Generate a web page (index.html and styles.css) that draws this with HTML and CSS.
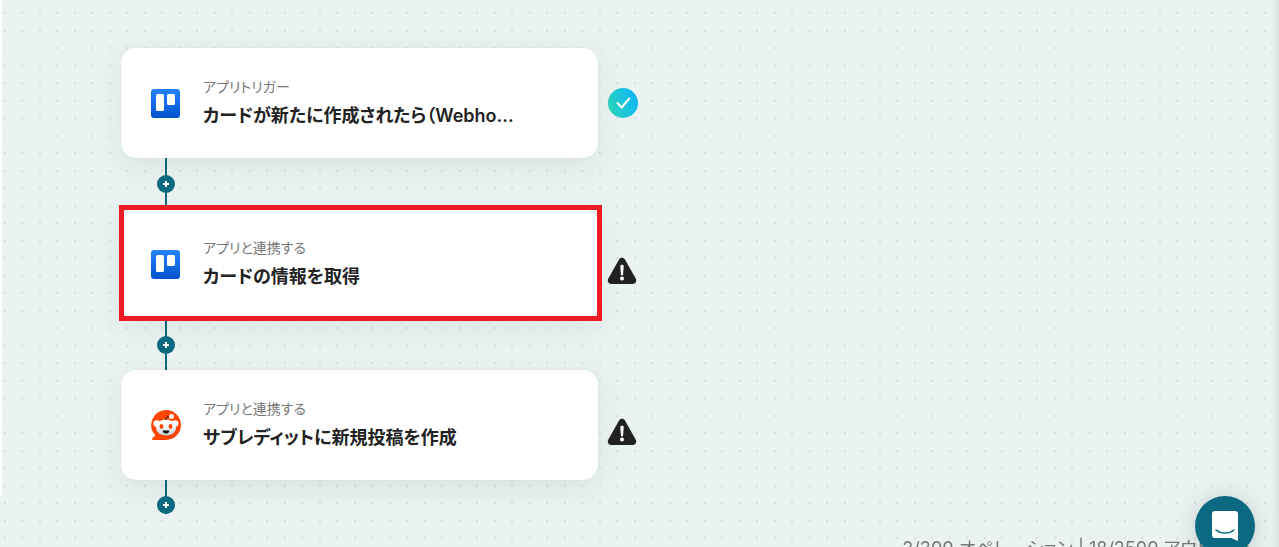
FILE: index.html
```
<!DOCTYPE html>
<html lang="ja">

<head>
    <meta charset="UTF-8">
    <meta name="viewport" content="width=device-width, initial-scale=1.0">
    <title>フロー</title>
    <link rel="stylesheet" href="styles.css">
</head>

<body>
    <svg class="defs" aria-hidden="true">
        <defs>
            <linearGradient id="trello-blue" x1="0" y1="0" x2="0" y2="1">
                <stop offset="0" stop-color="#2684ff" />
                <stop offset="1" stop-color="#0052cc" />
            </linearGradient>
            <linearGradient id="snoo-face" x1="0" y1="0" x2="0" y2="1">
                <stop offset="0.4" stop-color="#ffffff" />
                <stop offset="1" stop-color="#b9cdd4" />
            </linearGradient>
            <symbol id="trello" viewBox="0 0 30 30">
                <rect width="29" height="29" y="1" rx="3" fill="url(#trello-blue)" />
                <rect x="5" y="6" width="8" height="17" rx="1.500" fill="#fff" />
                <rect x="16" y="6" width="8" height="11" rx="1.500" fill="#fff" />
            </symbol>
            <symbol id="reddit" viewBox="0 0 30 30">
                <path d="M15 0a15 15 0 1 1 0 30H2.200c-1.300 0-1.600-1-.8-1.800l3-2.900A15 15 0 0 1 15 0z" fill="#ff4500" />
                <circle cx="5.800" cy="13.500" r="3.300" fill="#fff" />
                <circle cx="24.200" cy="13.500" r="3.300" fill="#fff" />
                <ellipse cx="15" cy="17.500" rx="10" ry="8" fill="url(#snoo-face)" />
                <path d="M14.800 10c.2-2.400 1.400-3.700 4-4" fill="none" stroke="#222" stroke-width="1.200" />
                <circle cx="20.500" cy="6.500" r="2.500" fill="#fff" />
                <ellipse cx="10.500" cy="16.500" rx="1.900" ry="2.400" fill="#ff4500" />
                <ellipse cx="19.500" cy="16.500" rx="1.900" ry="2.400" fill="#ff4500" />
                <path d="M11.500 20.500h7c-.3 2-1.600 3-3.500 3s-3.200-1-3.500-3z" fill="#111" />
            </symbol>
            <symbol id="warning" viewBox="0 0 30 28">
                <path d="M12 2.400c1.300-2.200 4.700-2.200 6 0l10.800 19.400c1.200 2.200-.3 5.200-3 5.200H4.200c-2.700 0-4.200-3-3-5.200z" fill="#222" />
                <path d="M13.300 9c0-1.800 3.400-1.800 3.400 0l-.6 8.500c-.1 1.200-2.100 1.200-2.200 0z" fill="#fff" />
                <circle cx="15" cy="21.500" r="2" fill="#fff" />
            </symbol>
        </defs>
    </svg>

    <main class="canvas">
        <div class="flow">
            <div class="row">
                <section class="card">
                    <svg class="app-icon" role="img" aria-label="Trello"><use href="#trello" /></svg>
                    <div class="card-text">
                        <p class="label">アプリトリガー</p>
                        <h2 class="title">カードが新たに作成されたら（Webho...</h2>
                    </div>
                </section>
                <span class="done" role="img" aria-label="完了">
                    <svg viewBox="0 0 30 30"><path d="M9.500 15l4.200 4.500 7.500-9" /></svg>
                </span>
            </div>
            <div class="connector">
                <button class="add" type="button" aria-label="追加"></button>
            </div>
            <div class="row">
                <section class="card selected">
                    <svg class="app-icon" role="img" aria-label="Trello"><use href="#trello" /></svg>
                    <div class="card-text">
                        <p class="label">アプリと連携する</p>
                        <h2 class="title">カードの情報を取得</h2>
                    </div>
                </section>
                <svg class="warning" role="img" aria-label="未設定"><use href="#warning" /></svg>
            </div>
            <div class="connector">
                <button class="add" type="button" aria-label="追加"></button>
            </div>
            <div class="row">
                <section class="card">
                    <svg class="app-icon" role="img" aria-label="Reddit"><use href="#reddit" /></svg>
                    <div class="card-text">
                        <p class="label">アプリと連携する</p>
                        <h2 class="title">サブレディットに新規投稿を作成</h2>
                    </div>
                </section>
                <svg class="warning" role="img" aria-label="未設定"><use href="#warning" /></svg>
            </div>
            <div class="connector last">
                <button class="add" type="button" aria-label="追加"></button>
            </div>
        </div>
    </main>

    <p class="usage">2/300 オペレーション | 18/2500 アウトプット</p>

    <button class="chat" type="button" aria-label="チャット">
        <svg viewBox="0 0 28 32">
            <path d="M4 1h20a3 3 0 0 1 3 3v27l-7-3H4a3 3 0 0 1-3-3V4a3 3 0 0 1 3-3z" fill="#fff" />
            <path d="M5 20c5 4 13 4 18 0" fill="none" stroke="#0b6a82" stroke-width="1.500" stroke-linecap="round" />
        </svg>
    </button>
</body>

</html>
```

FILE: styles.css
```
* {
    box-sizing: border-box;
}

body {
    margin: 0;
    min-height: 100vh;
    overflow: hidden;
    background-color: #eaf3f2;
    /* two dots per row and column in each 35px tile */
    background-image:
        radial-gradient(circle at 5px 13px, #d8dfde 1px, transparent 1px),
        radial-gradient(circle at 22px 13px, #d8dfde 1px, transparent 1px),
        radial-gradient(circle at 5px 31px, #d8dfde 1px, transparent 1px),
        radial-gradient(circle at 22px 31px, #d8dfde 1px, transparent 1px);
    background-size: 35px 35px;
    font-family: Inter, "Noto Sans CJK JP", sans-serif;
    font-feature-settings: "palt";
    color: #222;
}

/* panel edges on both sides of the canvas */
body::before {
    content: "";
    position: fixed;
    top: 0;
    left: 0;
    bottom: 51px;
    width: 2px;
    background: #fff;
}

body::after {
    content: "";
    position: fixed;
    top: 0;
    right: 0;
    bottom: 0;
    width: 8px;
    background: linear-gradient(to right, transparent, #d9e1e0);
}

.defs {
    position: absolute;
    width: 0;
    height: 0;
}

.canvas {
    padding: 48px 0 0 121px;
}

.row {
    display: flex;
    align-items: center;
    gap: 10px;
}

.card {
    position: relative;
    display: flex;
    align-items: center;
    gap: 22px;
    width: 477px;
    padding: 27px 30px;
    background: #fff;
    border-radius: 15px;
    box-shadow: 0 0 0 1px rgba(0, 0, 0, 0.02), 0 8px 30px rgba(0, 40, 40, 0.08);
}

/* red highlight frame around the current step */
.selected::after {
    content: "";
    position: absolute;
    inset: -4px -4px -2px -2px;
    border: 5px solid #ed1c24;
}

.app-icon {
    width: 30px;
    height: 30px;
}

.card-text {
    display: grid;
    gap: 2px;
}

.label,
.title {
    margin: 0;
    white-space: nowrap;
}

.label {
    font-size: 14px;
    line-height: 24px;
    color: #777;
}

.title {
    font-size: 18px;
    font-weight: 600;
    line-height: 30px;
}

.done {
    width: 30px;
    height: 30px;
    border-radius: 50%;
    background: linear-gradient(70deg, #30dcb8, #12b8ee 80%);
}

.done path {
    fill: none;
    stroke: #fff;
    stroke-width: 2;
    stroke-linecap: round;
    stroke-linejoin: round;
}

.warning {
    width: 30px;
    height: 28px;
    margin: 14px 0 0 -1px;
}

.connector {
    display: flex;
    align-items: center;
    justify-content: center;
    width: 90px;
    height: 51px;
    background: linear-gradient(#0b6a82, #0b6a82) center / 2px 100% no-repeat;
}

.last {
    align-items: flex-end;
    height: 34px;
}

.add {
    width: 18px;
    height: 18px;
    padding: 0;
    border: 0;
    border-radius: 50%;
    background:
        linear-gradient(#fff, #fff) center / 6px 2px no-repeat,
        linear-gradient(#fff, #fff) center / 2px 6px no-repeat,
        #0b6a82;
}

.usage {
    position: fixed;
    right: 24px;
    bottom: -15px;
    margin: 0;
    font-size: 18px;
    line-height: 26px;
    white-space: nowrap;
    color: #777;
}

.chat {
    position: fixed;
    right: 24px;
    bottom: -9px;
    display: grid;
    place-items: center;
    width: 60px;
    height: 60px;
    padding: 0;
    border: 0;
    border-radius: 50%;
    background: #0b6a82;
    box-shadow: 0 2px 24px rgba(0, 0, 0, 0.16);
}

.chat svg {
    width: 28px;
    height: 32px;
}
```
